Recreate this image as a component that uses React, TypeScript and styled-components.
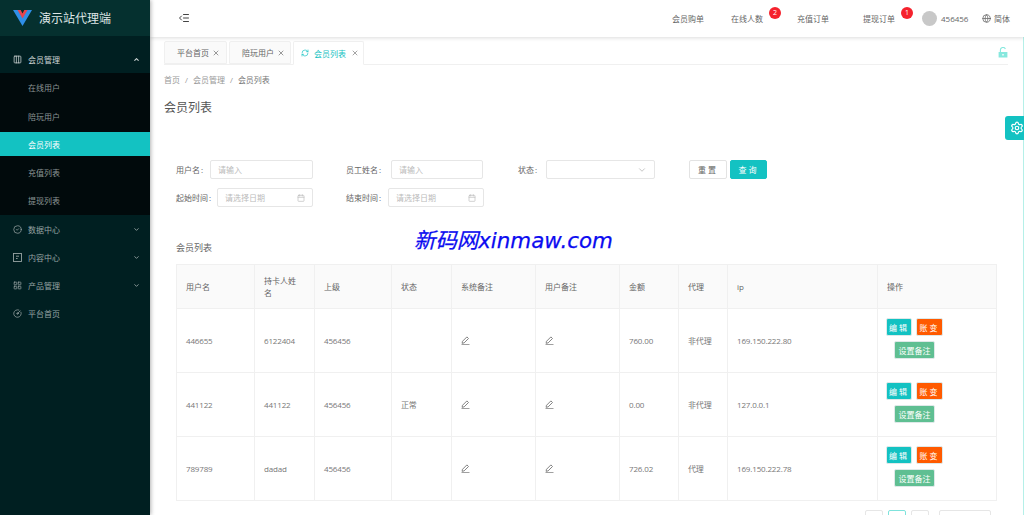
import React from "react";
import styled, { createGlobalStyle } from "styled-components";
import {
  Calendar,
  ChevronDown,
  ChevronUp,
  CircleCheck,
  CircleGauge,
  Columns3,
  Globe,
  IndentDecrease,
  LayoutGrid,
  RefreshCw,
  Settings,
  X,
} from "lucide-react";

const Global = createGlobalStyle`
  html, body { margin: 0; padding: 0; height: 515px; overflow: hidden; background: #fff; }
  body { font-family: "Open Sans", "Noto Sans CJK SC", sans-serif; font-size: 8px; color: #666; }
  * { box-sizing: border-box; }
`;

const Page = styled.div`
  display: flex;
  width: 1024px;
  height: 515px;
  overflow: hidden;
  position: relative;
`;

const Sidebar = styled.aside`
  width: 150px;
  flex: none;
  background: #001f21;
  box-shadow: 1px 0 4px rgba(0, 0, 0, 0.3);
  z-index: 2;
`;

const Brand = styled.div`
  height: 36px;
  display: flex;
  align-items: center;
  gap: 7px;
  padding-left: 13px;
  background: #05302f;
  color: #dfe6e6;
  font-size: 12px;
`;

const Menu = styled.nav`
  padding-top: 9px;
`;

const MenuRow = styled.div<{ $open?: boolean }>`
  height: 28.2px;
  display: flex;
  align-items: center;
  gap: 6px;
  padding: 0 10px 0 13px;
  color: ${(p) => (p.$open ? "#cfd6d6" : "#97a3a3")};
  span { flex: 1; }
`;

const SubMenu = styled.div`
  background: #010a0c;
  height: 142px;
  display: flex;
  flex-direction: column;
  justify-content: center;
`;

const SubItem = styled.div<{ $active?: boolean }>`
  height: 23.5px;
  margin: 2.35px 0;
  display: flex;
  align-items: center;
  padding-left: 28px;
  background: ${(p) => (p.$active ? "#13c2c2" : "transparent")};
  color: ${(p) => (p.$active ? "#fff" : "#8c9696")};
`;

const Main = styled.main`
  flex: 1;
  min-width: 0;
  display: flex;
  flex-direction: column;
`;

const TopBar = styled.header`
  height: 37px;
  flex: none;
  display: flex;
  align-items: center;
  padding: 0 0 1px 28px;
  background: #fff;
  box-shadow: 0 1px 4px rgba(0, 0, 0, 0.14);
  position: relative;
  z-index: 1;
`;

const TopLinks = styled.div`
  margin-left: auto;
  display: flex;
  align-items: center;
  height: 100%;
  padding-right: 14px;
  color: #666;
`;

const TopLink = styled.div<{ $w: number }>`
  width: ${(p) => p.$w}px;
  position: relative;
`;

const Badge = styled.i`
  position: absolute;
  top: -6px;
  left: 38px;
  width: 12px;
  height: 12px;
  border-radius: 50%;
  background: #f5222d;
  color: #fff;
  font-style: normal;
  font-size: 7px;
  line-height: 12px;
  text-align: center;
`;

const Avatar = styled.div`
  width: 15px;
  height: 15px;
  border-radius: 50%;
  background: #c8c8c8;
  margin-right: 4px;
`;

const UserName = styled.div`
  width: 41px;
`;

const Lang = styled.div`
  display: flex;
  align-items: center;
  gap: 3px;
`;

const Content = styled.div`
  flex: 1;
  min-height: 0;
  padding: 4px 15px 0 14px;
  border-right: 1px solid #b5f0e8;
`;

const TabBar = styled.div`
  height: 24px;
  display: flex;
  align-items: flex-end;
  gap: 2px;
  border-bottom: 1px solid #f0f0f0;
  position: relative;
`;

const Tab = styled.div<{ $active?: boolean; $w: number }>`
  width: ${(p) => p.$w}px;
  height: ${(p) => (p.$active ? "24px" : "23px")};
  display: flex;
  align-items: center;
  gap: ${(p) => (p.$active ? "5px" : "3px")};
  padding-left: ${(p) => (p.$active ? "7px" : "12px")};
  border: 1px solid #f0f0f0;
  border-bottom-color: ${(p) => (p.$active ? "#fff" : "#f0f0f0")};
  border-radius: 2px 2px 0 0;
  background: ${(p) => (p.$active ? "#fff" : "#fafafa")};
  color: ${(p) => (p.$active ? "#13c2c2" : "#666")};
  margin-bottom: ${(p) => (p.$active ? "-1px" : "0")};
`;

const TabLock = styled.div`
  position: absolute;
  right: 0;
  top: 6px;
  display: flex;
`;

const Crumbs = styled.div`
  height: 29px;
  display: flex;
  align-items: center;
  gap: 5px;
  color: #999;
  b { font-weight: 400; color: #777; }
`;

const Title = styled.h1`
  margin: 0;
  height: 26px;
  font-size: 12px;
  font-weight: 400;
  line-height: 28px;
  color: #555;
`;

const Form = styled.form`
  margin-top: 40px;
  padding-left: 12px;
  display: flex;
  flex-direction: column;
  gap: 9px;
`;

const FormRow = styled.div`
  display: flex;
  height: 19px;
`;

const Field = styled.div<{ $w: number; $gap: number }>`
  width: ${(p) => p.$w}px;
  display: flex;
  align-items: center;
  justify-content: flex-start;
  gap: ${(p) => p.$gap}px;
  flex: none;
`;

const Label = styled.label`
  color: #666;
  white-space: nowrap;
  &::after { content: ":"; margin-left: 1px; }
`;

const Input = styled.div<{ $w: number }>`
  width: ${(p) => p.$w}px;
  height: 19px;
  border: 1px solid #e6e6e6;
  border-radius: 2px;
  padding: 0 7px;
  display: flex;
  align-items: center;
  justify-content: space-between;
  color: #bbb;
`;

const Btn = styled.button<{ $primary?: boolean; $w: number }>`
  width: ${(p) => p.$w}px;
  height: 19px;
  padding: 0;
  margin-right: 3px;
  font: inherit;
  letter-spacing: 2px;
  border-radius: 2px;
  border: 1px solid ${(p) => (p.$primary ? "#13c2c2" : "#e3e3e3")};
  background: ${(p) => (p.$primary ? "#13c2c2" : "#fff")};
  color: ${(p) => (p.$primary ? "#fff" : "#666")};
`;

const CardTitle = styled.div`
  margin: 31px 0 0 12px;
  height: 20px;
  line-height: 20px;
  font-size: 9px;
  color: #666;
`;

const TableWrap = styled.div`
  margin: 6px 0 0 12px;
`;

const Table = styled.table`
  width: 820px;
  table-layout: fixed;
  border-collapse: collapse;
`;

const Col = styled.col<{ $w: number }>`
  width: ${(p) => p.$w}px;
`;

const Th = styled.th`
  height: 44px;
  padding: 0 12px 0 9px;
  background: #fafafa;
  border: 1px solid #f0f0f0;
  font-weight: 400;
  text-align: left;
  color: #666;
  line-height: 12px;
`;

const Td = styled.td`
  height: 64px;
  padding: 0 9px;
  border: 1px solid #f0f0f0;
  color: #777;
  letter-spacing: -0.15px;
  svg { display: block; }
`;

const Actions = styled.div`
  width: 57px;
  margin: 0 0 4px -1px;
  display: flex;
  flex-wrap: wrap;
  justify-content: center;
  gap: 5px 4px;
`;

const ActBtn = styled.button<{ $bg: string; $w: number; $ls?: number }>`
  width: ${(p) => p.$w}px;
  height: 18px;
  padding: 0;
  font: inherit;
  letter-spacing: ${(p) => p.$ls ?? 0}px;
  border: 1px solid #dfe9e9;
  border-radius: 2px;
  background: ${(p) => p.$bg};
  color: #fff;
`;

const Pager = styled.div`
  margin-top: 9px;
  display: flex;
  padding-left: 701px;
  gap: 5px;
`;

const PageBtn = styled.div<{ $active?: boolean }>`
  width: 18px;
  height: 18px;
  border-radius: 2px;
  border: 1px solid ${(p) => (p.$active ? "#7fe3dc" : "#e6e6e6")};
`;

const PageSize = styled.div`
  width: 52px;
  height: 18px;
  margin-left: 5px;
  border-radius: 2px;
  border: 1px solid #e6e6e6;
`;

const Gear = styled.div`
  position: absolute;
  right: 0;
  top: 116px;
  width: 19px;
  height: 24px;
  background: #13c2c2;
  border-radius: 3px 0 0 3px;
  color: #fff;
  display: flex;
  align-items: center;
  padding-left: 5px;
  z-index: 3;
  svg { flex: none; }
`;

const Watermark = styled.div`
  position: absolute;
  left: 414px;
  top: 226px;
  font-family: "DejaVu Sans", "Noto Sans CJK SC", sans-serif;
  font-style: italic;
  font-size: 21.4px;
  line-height: 30px;
  color: #0b0bf0;
  -webkit-text-stroke: 0.25px #0b0bf0;
  white-space: nowrap;
  z-index: 3;
`;

const Logo = () => (
  <svg width="19" height="16" viewBox="0 0 19 16">
    <path d="M0 0h5.5L9.5 7 13.5 0H19L9.5 16z" fill="#2f8fe8" />
    <path d="M4.5 0h3.2L9.5 3.4 11.3 0h3.2L9.5 8.6z" fill="#e8454d" />
  </svg>
);

const OpenLock = () => (
  <svg width="10" height="11" viewBox="0 0 10 11">
    <path d="M2.4 5V3a2.6 2.6 0 0 1 5-1" fill="none" stroke="#87e8de" strokeWidth="1.1" />
    <path d="M0.6 5h8.8v5.5H0.6z M4.3 7.1v1.4h1.4V7.1z" fill="#87e8de" fillRule="evenodd" />
  </svg>
);

const EditPen = () => (
  <svg width="9" height="9" viewBox="0 0 9 9">
    <path d="M5.9 0.9l1.6 1.6-4.4 4.4-2 .4.4-2z" fill="none" stroke="#777" strokeWidth="0.9" />
    <path d="M0.5 8.5h8" stroke="#888" strokeWidth="0.8" />
  </svg>
);

const BoxIcon = () => (
  <svg width="9" height="9" viewBox="0 0 9 9" fill="none" stroke="currentColor" strokeWidth="0.9">
    <rect x="0.5" y="0.5" width="8" height="8" />
    <path d="M3 3.2h3M3 5.5h1.6" />
  </svg>
);

const nav = [
  { label: "数据中心", icon: <CircleCheck size={9} />, arrow: true },
  { label: "内容中心", icon: <BoxIcon />, arrow: true },
  { label: "产品管理", icon: <LayoutGrid size={9} />, arrow: true },
  { label: "平台首页", icon: <CircleGauge size={9} />, arrow: false },
];

const subs = ["在线用户", "陪玩用户", "会员列表", "充值列表", "提现列表"];

const rows = [
  ["446655", "6122404", "456456", "", "760.00", "非代理", "169.150.222.80"],
  ["441122", "441122", "456456", "正常", "0.00", "非代理", "127.0.0.1"],
  ["789789", "dadad", "456456", "", "726.02", "代理", "169.150.222.78"],
];

const widths = [78, 60, 77, 60, 84, 84, 59, 49, 150, 119];
const heads = ["用户名", "持卡人姓名", "上级", "状态", "系统备注", "用户备注", "金额", "代理", "ip", "操作"];

export default function App() {
  return (
    <Page>
      <Global />
      <Sidebar>
        <Brand>
          <Logo />
          演示站代理端
        </Brand>
        <Menu>
          <MenuRow $open>
            <Columns3 size={9} />
            <span>会员管理</span>
            <ChevronUp size={7} strokeWidth={3.5} />
          </MenuRow>
          <SubMenu>
            {subs.map((s) => (
              <SubItem key={s} $active={s === "会员列表"}>
                {s}
              </SubItem>
            ))}
          </SubMenu>
          {nav.map((n) => (
            <MenuRow key={n.label}>
              {n.icon}
              <span>{n.label}</span>
              {n.arrow && <ChevronDown size={7} strokeWidth={3} />}
            </MenuRow>
          ))}
        </Menu>
      </Sidebar>
      <Main>
        <TopBar>
          <IndentDecrease size={12} color="#444" />
          <TopLinks>
            <TopLink $w={59}>会员购单</TopLink>
            <TopLink $w={66}>
              在线人数<Badge>2</Badge>
            </TopLink>
            <TopLink $w={66}>充值订单</TopLink>
            <TopLink $w={59}>
              提现订单<Badge>1</Badge>
            </TopLink>
            <Avatar />
            <UserName>456456</UserName>
            <Lang>
              <Globe size={9} />
              简体
            </Lang>
          </TopLinks>
        </TopBar>
        <Content>
          <TabBar>
            <Tab $w={63}>
              平台首页
              <X size={8} />
            </Tab>
            <Tab $w={62}>
              陪玩用户
              <X size={8} />
            </Tab>
            <Tab $active $w={71}>
              <RefreshCw size={8} />
              <span>会员列表</span>
              <X size={8} color="#777" />
            </Tab>
            <TabLock>
              <OpenLock />
            </TabLock>
          </TabBar>
          <Crumbs>
            <span>首页</span>
            <span>/</span>
            <span>会员管理</span>
            <span>/</span>
            <b>会员列表</b>
          </Crumbs>
          <Title>会员列表</Title>
          <Form>
            <FormRow>
              <Field $w={170} $gap={7}>
                <Label>用户名</Label>
                <Input $w={103}>请输入</Input>
              </Field>
              <Field $w={172} $gap={10}>
                <Label>员工姓名</Label>
                <Input $w={92}>请输入</Input>
              </Field>
              <Field $w={171} $gap={9}>
                <Label>状态</Label>
                <Input $w={109}>
                  <span />
                  <ChevronDown size={10} color="#bbb" />
                </Input>
              </Field>
              <Btn type="button" $w={38}>
                重置
              </Btn>
              <Btn type="button" $w={37} $primary>
                查询
              </Btn>
            </FormRow>
            <FormRow>
              <Field $w={170} $gap={6}>
                <Label>起始时间</Label>
                <Input $w={96}>
                  请选择日期
                  <Calendar size={8} />
                </Input>
              </Field>
              <Field $w={172} $gap={7}>
                <Label>结束时间</Label>
                <Input $w={96}>
                  请选择日期
                  <Calendar size={8} />
                </Input>
              </Field>
            </FormRow>
          </Form>
          <CardTitle>会员列表</CardTitle>
          <TableWrap>
            <Table>
              <colgroup>
                {widths.map((w, i) => (
                  <Col key={i} $w={w} />
                ))}
              </colgroup>
              <thead>
                <tr>
                  {heads.map((h) => (
                    <Th key={h}>{h}</Th>
                  ))}
                </tr>
              </thead>
              <tbody>
                {rows.map((r) => (
                  <tr key={r[0]}>
                    <Td>{r[0]}</Td>
                    <Td>{r[1]}</Td>
                    <Td>{r[2]}</Td>
                    <Td>{r[3]}</Td>
                    <Td>
                      <EditPen />
                    </Td>
                    <Td>
                      <EditPen />
                    </Td>
                    <Td>{r[4]}</Td>
                    <Td>{r[5]}</Td>
                    <Td>{r[6]}</Td>
                    <Td>
                      <Actions>
                        <ActBtn type="button" $bg="#13c2c2" $w={26} $ls={2}>
                          编辑
                        </ActBtn>
                        <ActBtn type="button" $bg="#ff5a00" $w={27} $ls={2}>
                          账变
                        </ActBtn>
                        <ActBtn type="button" $bg="#5fbf92" $w={41}>
                          设置备注
                        </ActBtn>
                      </Actions>
                    </Td>
                  </tr>
                ))}
              </tbody>
            </Table>
          </TableWrap>
          <Pager>
            <PageBtn />
            <PageBtn $active />
            <PageBtn />
            <PageSize />
          </Pager>
        </Content>
      </Main>
      <Gear>
        <Settings size={14} />
      </Gear>
      <Watermark>新码网xinmaw.com</Watermark>
    </Page>
  );
}
